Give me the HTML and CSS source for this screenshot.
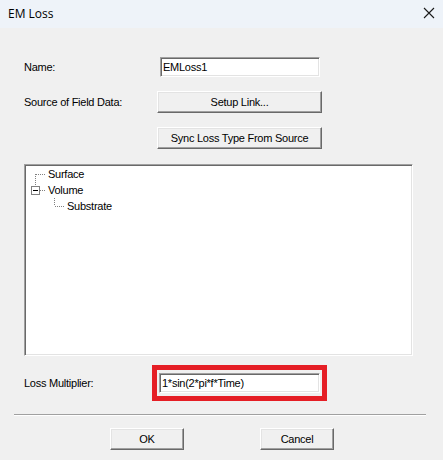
FILE: index.html
```html
<!DOCTYPE html>
<html>
<head>
<meta charset="utf-8">
<link rel="stylesheet" href="styles.css">
</head>
<body>
<div class="window">
  <div class="titlebar">
    <span class="title">EM Loss</span>
    <svg class="close" width="12" height="12" viewBox="0 0 12 12"><path d="M1 1 L11 11 M11 1 L1 11" stroke="#1a1a1a" stroke-width="1.1" fill="none"/></svg>
  </div>
  <div class="dialog">
    <div class="row row-name">
      <span class="label">Name:</span>
      <div class="field name-field">EMLoss1</div>
    </div>
    <div class="row row-btn">
      <span class="label">Source of Field Data:</span>
      <div class="btn wide">Setup Link...</div>
    </div>
    <div class="row row-btn">
      <span class="label"></span>
      <div class="btn wide">Sync Loss Type From Source</div>
    </div>
    <div class="tree">
      <div class="node">
        <svg width="22" height="16" viewBox="0 0 22 16"><path d="M9.5 8 V16 M10 8.5 H20" stroke="#808080" stroke-dasharray="1 1" fill="none"/></svg>
        <span>Surface</span>
      </div>
      <div class="node">
        <svg width="22" height="16" viewBox="0 0 22 16"><path d="M9.5 0 V4" stroke="#808080" stroke-dasharray="1 1" fill="none"/><rect x="5.5" y="4.5" width="8" height="8" fill="#fff" stroke="#808080"/><path d="M7 8.5 H12" stroke="#000"/><path d="M14 8.5 H20" stroke="#808080" stroke-dasharray="1 1" fill="none"/></svg>
        <span>Volume</span>
      </div>
      <div class="node">
        <svg width="41" height="16" viewBox="0 0 41 16"><path d="M28.5 0 V8 M29 8.5 H39" stroke="#808080" stroke-dasharray="1 1" fill="none"/></svg>
        <span>Substrate</span>
      </div>
    </div>
    <div class="row row-loss">
      <span class="label loss-label">Loss Multiplier:</span>
      <div class="highlight">
        <div class="field">1*sin(2*pi*f*Time)</div>
      </div>
    </div>
    <div class="separator"></div>
    <div class="actions">
      <div class="btn action">OK</div>
      <div class="btn action">Cancel</div>
    </div>
  </div>
</div>
</body>
</html>
```

FILE: styles.css
```css
html, body {
  margin: 0;
  padding: 0;
  background: #f0f0f0;
}
.window {
  width: 443px;
  height: 460px;
  background: #f0f0f0;
  font-family: "Liberation Sans", Arial, sans-serif;
  font-size: 11px;
  letter-spacing: -0.25px;
  color: #000;
}
.titlebar {
  height: 28px;
  background: #eef3f9;
  display: flex;
  align-items: center;
  justify-content: space-between;
  padding: 0 8px 2px 8px;
  box-sizing: border-box;
  letter-spacing: 0;
}
.title {
  font-family: "Open Sans", "Noto Sans", sans-serif;
  font-size: 12px;
  color: #000;
}
.dialog {
  padding: 29px 0 0 24px;
}
.row {
  display: flex;
  align-items: center;
}
.label {
  width: 133px;
  flex: none;
}
.row-name {
  height: 20px;
}
.row-btn {
  margin-top: 14px;
  height: 22px;
}
.field {
  height: 20px;
  box-sizing: border-box;
  background: #fff;
  border: 1px solid;
  border-color: #a0a0a0 #fff #fff #a0a0a0;
  box-shadow: inset 1px 1px #696969, inset -1px -1px #e3e3e3;
  padding: 0 2px;
  line-height: 18px;
}
.name-field {
  width: 160px;
  margin-left: 3px;
}
.btn {
  box-sizing: border-box;
  height: 22px;
  background: #f0f0f0;
  border: 1px solid;
  border-color: #fff #696969 #696969 #fff;
  box-shadow: inset -1px -1px #a0a0a0, inset 1px 1px #e3e3e3;
  display: flex;
  align-items: center;
  justify-content: center;
}
.wide {
  width: 165px;
}
.tree {
  margin-top: 15px;
  width: 389px;
  height: 192px;
  box-sizing: border-box;
  background: #fff;
  border: 1px solid;
  border-color: #a0a0a0 #fff #fff #a0a0a0;
  box-shadow: inset 1px 1px #696969, inset -1px -1px #e3e3e3;
  padding: 1px;
}
.node {
  display: flex;
  align-items: center;
  height: 16px;
}
.node svg {
  flex: none;
}
.row-loss {
  margin-top: 9px;
}
.loss-label {
  width: 128px;
}
.highlight {
  border: 5px solid #e51e25;
  padding: 3px 2px;
}
.highlight .field {
  width: 161px;
}
.separator {
  margin: 13px 0 0 -10px;
  width: 412px;
  border-top: 1px solid #a0a0a0;
  border-bottom: 1px solid #fff;
}
.actions {
  display: flex;
  margin-top: 12px;
  padding-left: 86px;
  gap: 76px;
}
.action {
  width: 74px;
}
```
